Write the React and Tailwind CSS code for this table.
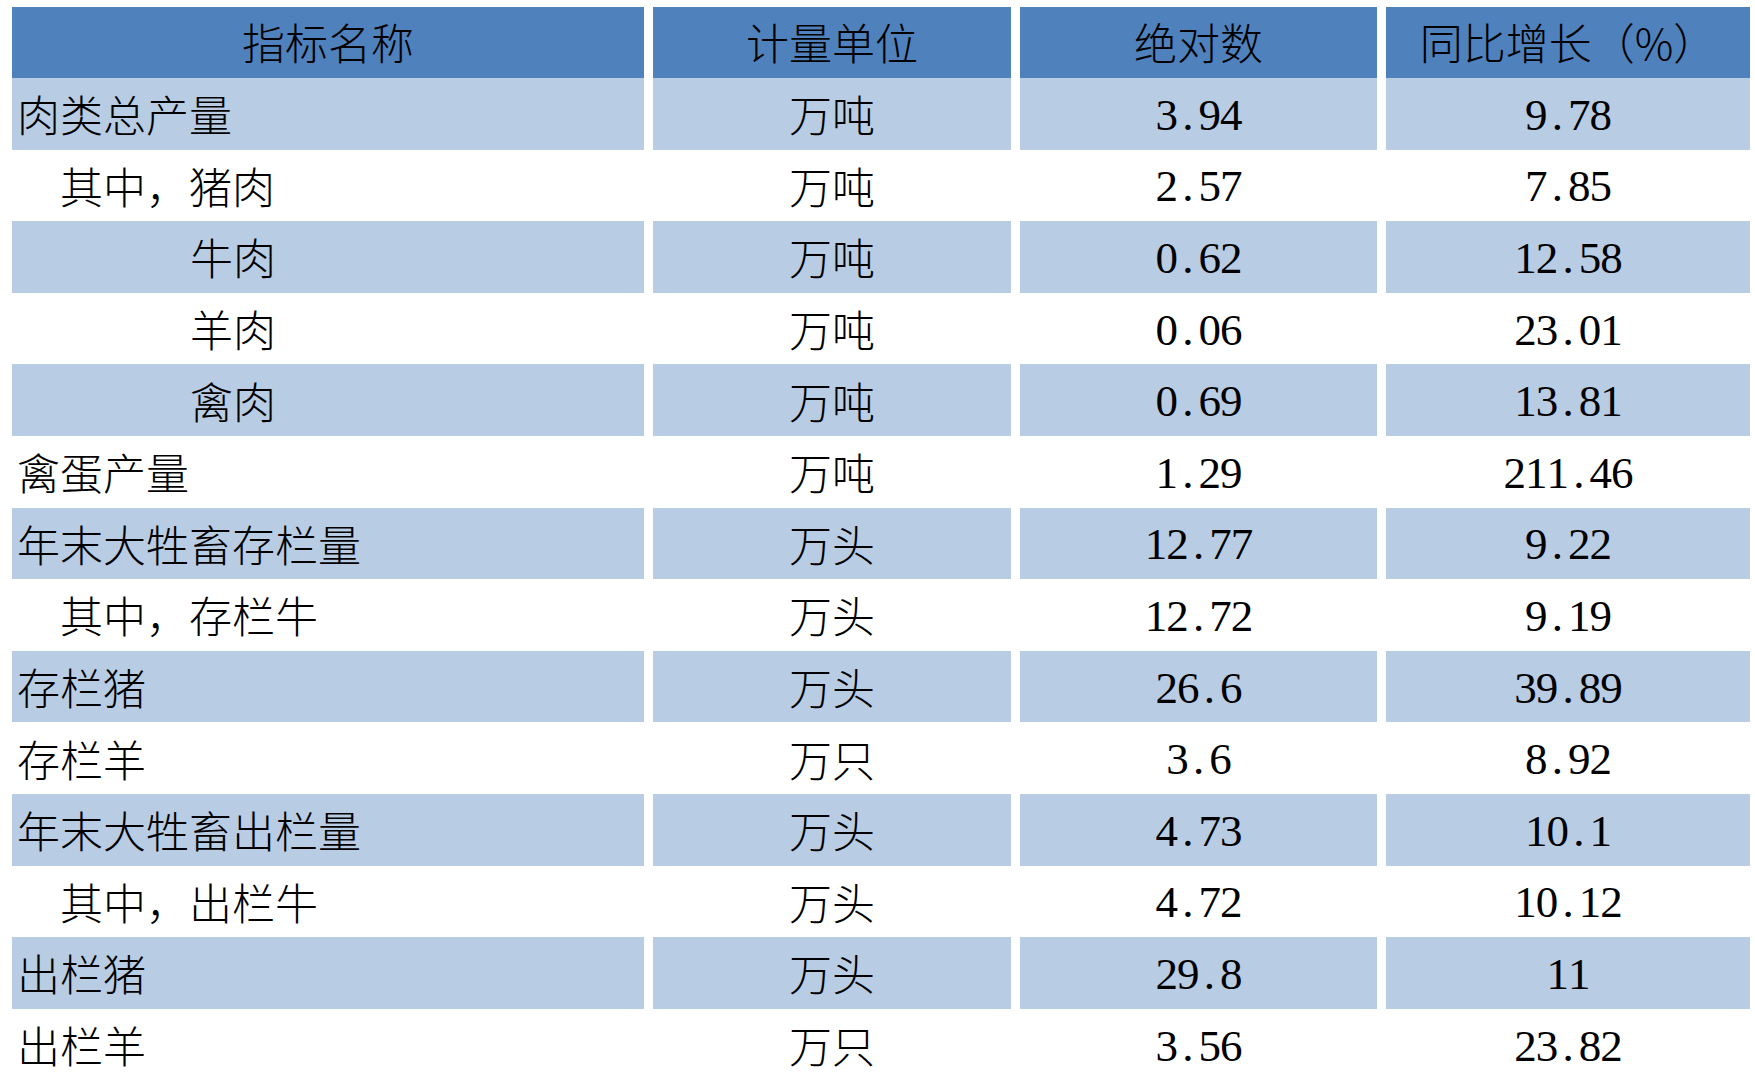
const headers = ['指标名称', '计量单位', '绝对数', '同比增长（%）']

// indent: 0 = none, 1 = one char, 4 = aligned under "其中，"
const rows = [
  { name: '肉类总产量', indent: 0, unit: '万吨', abs: '3.94', yoy: '9.78' },
  { name: '其中，猪肉', indent: 1, unit: '万吨', abs: '2.57', yoy: '7.85' },
  { name: '牛肉', indent: 4, unit: '万吨', abs: '0.62', yoy: '12.58' },
  { name: '羊肉', indent: 4, unit: '万吨', abs: '0.06', yoy: '23.01' },
  { name: '禽肉', indent: 4, unit: '万吨', abs: '0.69', yoy: '13.81' },
  { name: '禽蛋产量', indent: 0, unit: '万吨', abs: '1.29', yoy: '211.46' },
  { name: '年末大牲畜存栏量', indent: 0, unit: '万头', abs: '12.77', yoy: '9.22' },
  { name: '其中，存栏牛', indent: 1, unit: '万头', abs: '12.72', yoy: '9.19' },
  { name: '存栏猪', indent: 0, unit: '万头', abs: '26.6', yoy: '39.89' },
  { name: '存栏羊', indent: 0, unit: '万只', abs: '3.6', yoy: '8.92' },
  { name: '年末大牲畜出栏量', indent: 0, unit: '万头', abs: '4.73', yoy: '10.1' },
  { name: '其中，出栏牛', indent: 1, unit: '万头', abs: '4.72', yoy: '10.12' },
  { name: '出栏猪', indent: 0, unit: '万头', abs: '29.8', yoy: '11' },
  { name: '出栏羊', indent: 0, unit: '万只', abs: '3.56', yoy: '23.82' },
]

const indentClass = { 0: 'pl-[5px]', 1: 'pl-[48px]', 4: 'pl-[178px]' }

// half-width digit cells, like the Song typeface in the source
function Num({ value }) {
  return (
    <span className="flex pt-[3px] font-['Liberation_Serif',serif] text-[45px]">
      {value.split('').map((c, i) => (
        <span key={i} className="w-[21.5px] text-center">{c}</span>
      ))}
    </span>
  )
}

export default function App() {
  return (
    <div className="w-[1755px] h-[1082px] overflow-hidden bg-white pl-[12px] pt-[7px] text-black font-['Noto_Sans_CJK_SC',sans-serif] text-[43px] font-light leading-none">
      <div className="grid grid-cols-[632px_358px_357px_364px] gap-x-[9px]">
        {headers.map((h) => (
          <div key={h} className="h-[71px] pb-[3px] bg-[#4f81bd] flex items-center justify-center">
            {h}
          </div>
        ))}

        {rows.map((r, i) => {
          const bg = i % 2 === 0 ? 'bg-[#b8cce4]' : 'bg-white'
          return [
            <div key={r.name + 'n'} className={`h-[71.6px] flex items-center ${bg} ${indentClass[r.indent]}`}>
              {r.name}
            </div>,
            <div key={r.name + 'u'} className={`h-[71.6px] flex items-center justify-center ${bg}`}>
              {r.unit}
            </div>,
            <div key={r.name + 'a'} className={`h-[71.6px] flex items-center justify-center ${bg}`}>
              <Num value={r.abs} />
            </div>,
            <div key={r.name + 'y'} className={`h-[71.6px] flex items-center justify-center ${bg}`}>
              <Num value={r.yoy} />
            </div>,
          ]
        })}
      </div>
    </div>
  )
}
